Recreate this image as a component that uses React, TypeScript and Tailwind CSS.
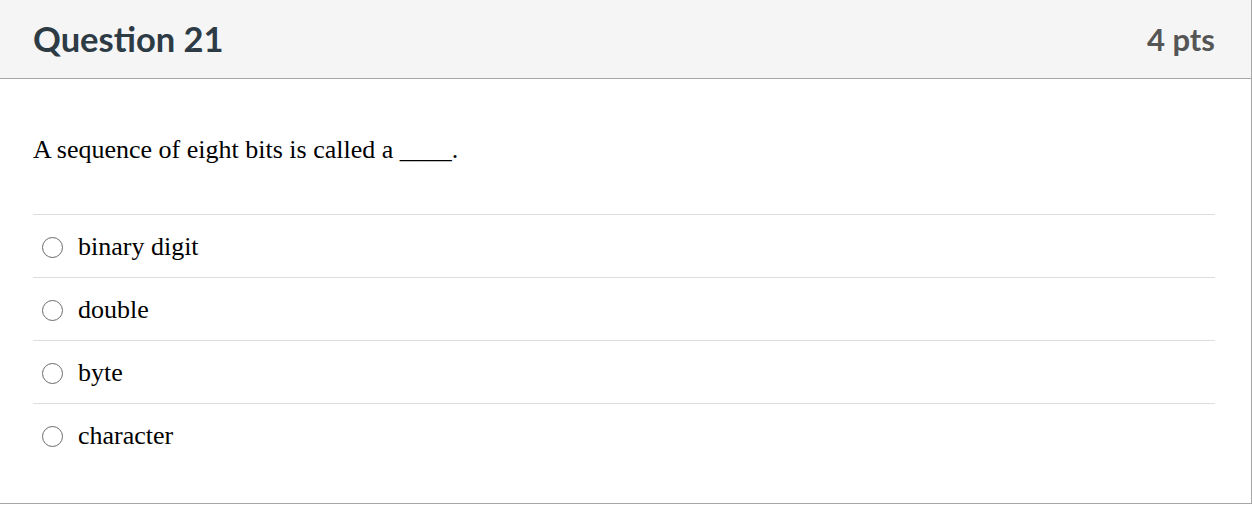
const answers = ['binary digit', 'double', 'byte', 'character']

export default function App() {
  return (
    <div className="w-[1252px] h-[510px] bg-white">
      <div className="border-r border-b border-[#a6a6a6] h-[504px]">
        <div className="h-[79px] bg-[#f5f5f5] border-b border-[#a6a6a6] flex items-center justify-between pl-[33px] pr-[36px]">
          <h2 className="text-[34.5px] font-bold text-[#2d3b45] font-['Lato',sans-serif] leading-none">Question 21</h2>
          <span className="text-[31px] font-bold text-[#555555] font-['Lato',sans-serif] leading-none">4 pts</span>
        </div>
        <div className="px-[33px] pr-[36px] font-['Liberation_Serif',serif] text-black">
          <p className="text-[26px] leading-none pt-[58px] pb-[51px]">A sequence of eight bits is called a ____.</p>
          <div>
            {answers.map((a) => (
              <label key={a} className="flex items-center h-[63px] border-t border-[#dedede] pl-[9px] gap-[15px]">
                <span className="w-[21px] h-[21px] mt-[2px] rounded-full border-[1.5px] border-[#6b6b6b] bg-white" />
                <span className="text-[26px] leading-none mt-[1px]">{a}</span>
              </label>
            ))}
          </div>
        </div>
      </div>
    </div>
  )
}
